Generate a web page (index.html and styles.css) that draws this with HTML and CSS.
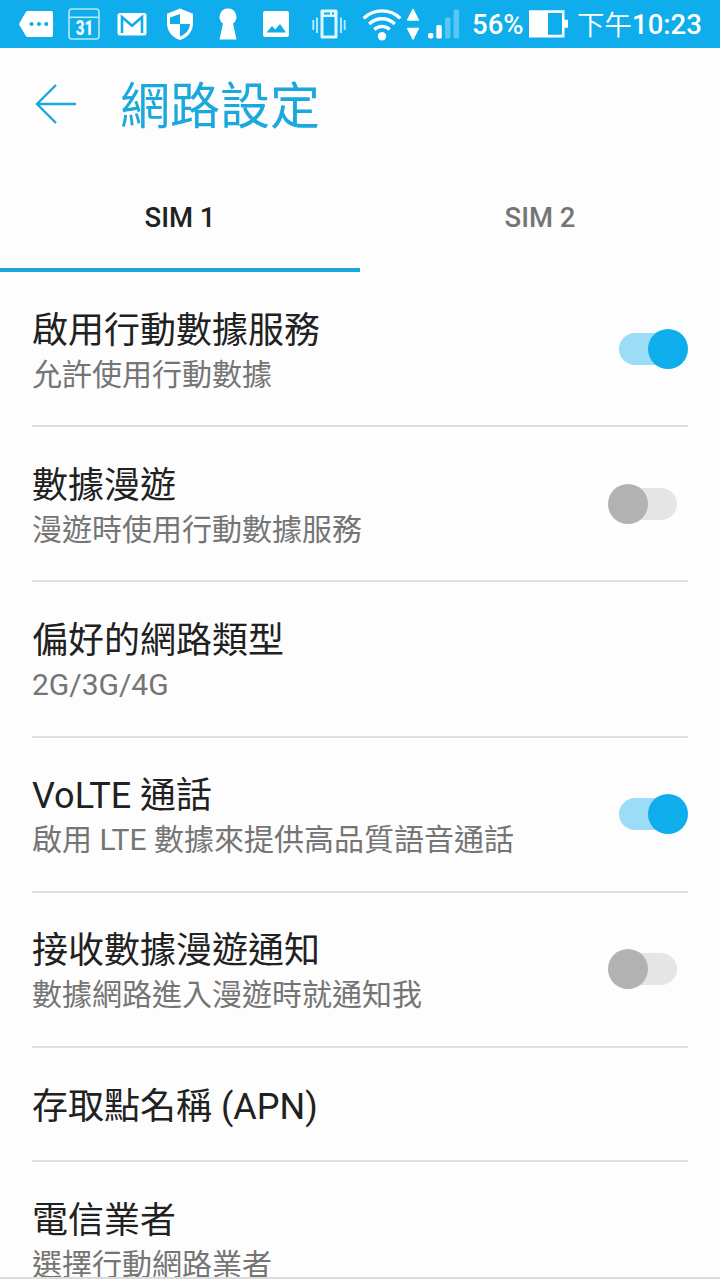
FILE: index.html
```html
<!DOCTYPE html>
<html lang="zh-Hant">

<head>
    <meta charset="UTF-8">
    <meta name="viewport" content="width=device-width, initial-scale=1.0">
    <title>網路設定</title>
    <link rel="stylesheet" href="styles.css">
</head>

<body>
    <div id="status-bar">
        <div class="notifications">
            <!-- message tag -->
            <svg width="48" height="48" viewBox="0 0 48 48">
                <path d="M15.500 11H39a2 2 0 0 1 2 2v22a2 2 0 0 1-2 2H15.500a2 2 0 0 1-1.600-.9L7.500 25.200a2 2 0 0 1 0-2.200l6.400-11a2 2 0 0 1 1.600-1z" fill="#fff"/>
                <g fill="#0fadec"><circle cx="19.500" cy="24" r="2.100"/><circle cx="27" cy="24" r="2.100"/><circle cx="34.300" cy="24" r="2.100"/></g>
            </svg>
            <!-- calendar -->
            <svg width="48" height="48" viewBox="0 0 48 48">
                <rect x="9" y="9" width="30" height="30" rx="3" fill="none" stroke="#b4ecfb" stroke-width="1.600"/>
                <path d="M9 17.300h30" stroke="#b4ecfb" stroke-width="1.600"/>
                <text x="24.500" y="35.300" text-anchor="middle" class="calendar-day" textLength="17.500" lengthAdjust="spacingAndGlyphs">31</text>
            </svg>
            <!-- mail -->
            <svg width="48" height="48" viewBox="0 0 48 48">
                <rect x="9.500" y="13" width="29" height="22.500" rx="2.500" fill="#fff"/>
                <path d="M14 33V17l10 8.700L34 17v16" fill="none" stroke="#0fadec" stroke-width="2.600"/>
            </svg>
            <!-- shield -->
            <svg width="48" height="48" viewBox="0 0 48 48">
                <path d="M24 8.500l13 5.300v9.700c0 7.500-5.200 14-13 16.500-7.800-2.500-13-9-13-16.500v-9.700z" fill="#fff"/>
                <path d="M24 14v10H14v-6.500zM24 24h10c-.3 5.500-4 10-10 12.500z" fill="#0fadec"/>
            </svg>
            <!-- keyhole -->
            <svg width="48" height="48" viewBox="0 0 48 48">
                <path d="M24 8.500a8.300 8.300 0 0 1 5 15L32.500 39.500h-17L19 23.500a8.300 8.300 0 0 1 5-15z" fill="#fff"/>
            </svg>
            <!-- picture -->
            <svg width="48" height="48" viewBox="0 0 48 48">
                <rect x="11" y="11" width="26" height="26" rx="2" fill="#fff"/>
                <path d="M14.500 32.500l5.500-6.500 3.300 3.600 4.700-5.600 6 8.500z" fill="#0fadec"/>
            </svg>
        </div>
        <div class="system">
            <!-- vibrate -->
            <svg class="vibrate" width="34" height="48" viewBox="0 0 34 48">
                <path fill-rule="evenodd" d="M10 9.500h14a1.500 1.500 0 0 1 1.500 1.500v26a1.500 1.500 0 0 1-1.500 1.500H10A1.500 1.500 0 0 1 8.500 37V11A1.500 1.500 0 0 1 10 9.500zM11.500 17v18.500h11V17zM12 12.500v2h6v-2zM20 12.500v2h2v-2z" fill="#dff8ff"/>
                <path d="M1.300 20v10M5 17.500v15.500M29 17.500v15.500M32.700 20v10" stroke="#b4ecfb" stroke-width="1.900"/>
            </svg>
            <svg class="wifi" width="40" height="48" viewBox="0 0 40 48">
                <g fill="none" stroke="#fff" stroke-width="3.300">
                    <path d="M1.700 18.300c10-10 26.600-10 36.600 0"/>
                    <path d="M7.200 24c7-7 18.600-7 25.600 0"/>
                    <path d="M12.300 29.500c4.300-4.300 11.100-4.300 15.400 0"/>
                </g>
                <circle cx="20" cy="36.200" r="4.200" fill="#fff"/>
            </svg>
            <svg class="traffic" width="14" height="48" viewBox="0 0 14 48">
                <path d="M7 9.500l5.300 10.500H1.700zM7 39l5.300-10.500H1.700z" fill="#fff" stroke="#fff" stroke-width="1.500" stroke-linejoin="round"/>
            </svg>
            <svg class="signal" width="34" height="48" viewBox="0 0 34 48">
                <g fill="#fff"><rect x="1" y="33" width="5.500" height="5.500" rx="2"/><rect x="9.300" y="25" width="5.500" height="13.500" rx="1.500"/></g>
                <g fill="#58c7f3"><rect x="18" y="17.500" width="5.500" height="21" rx="1.500"/><rect x="26.600" y="9.500" width="5.500" height="29" rx="1.500"/></g>
            </svg>
            <span class="percent">56%</span>
            <svg class="battery" width="40" height="48" viewBox="0 0 40 48">
                <path fill-rule="evenodd" d="M0 10.200h35.500v9.500H39v8h-3.500v9.900H0zM19 13v21.700h14V13z" fill="#fff"/>
            </svg>
            <span class="clock"><span class="ampm">下午</span><b>10:23</b></span>
        </div>
    </div>

    <div id="header">
        <svg class="back" width="42" height="42" viewBox="0 0 42 42">
            <path d="M21 2L2 21l19 19M2 21h39" fill="none" stroke="#1ba8dc" stroke-width="2.400"/>
        </svg>
        <h1>網路設定</h1>
    </div>

    <div id="tabs">
        <div class="tab active">SIM 1</div>
        <div class="tab">SIM 2</div>
    </div>

    <div id="settings">
        <div class="setting">
            <div class="label">
                <div class="title">啟用行動數據服務</div>
                <div class="summary">允許使用行動數據</div>
            </div>
            <div class="switch on"></div>
        </div>
        <div class="setting">
            <div class="label">
                <div class="title">數據漫遊</div>
                <div class="summary">漫遊時使用行動數據服務</div>
            </div>
            <div class="switch"></div>
        </div>
        <div class="setting">
            <div class="label">
                <div class="title">偏好的網路類型</div>
                <div class="summary">2G/3G/4G</div>
            </div>
        </div>
        <div class="setting">
            <div class="label">
                <div class="title">VoLTE 通話</div>
                <div class="summary">啟用 LTE 數據來提供高品質語音通話</div>
            </div>
            <div class="switch on"></div>
        </div>
        <div class="setting">
            <div class="label">
                <div class="title">接收數據漫遊通知</div>
                <div class="summary">數據網路進入漫遊時就通知我</div>
            </div>
            <div class="switch"></div>
        </div>
        <div class="setting single">
            <div class="label">
                <div class="title">存取點名稱 (APN)</div>
            </div>
        </div>
        <div class="setting">
            <div class="label">
                <div class="title">電信業者</div>
                <div class="summary">選擇行動網路業者</div>
            </div>
        </div>
    </div>
</body>

</html>
```
FILE: styles.css
```css
* {
    box-sizing: border-box;
}

body {
    font-family: Roboto, "Noto Sans CJK TC", sans-serif;
    background-color: #fdfdfd;
    color: #212121;
    margin: 0;
    height: 1279px;
    overflow: hidden;
    display: flex;
    flex-direction: column;
    border-bottom: 2px solid #dcdcdc;
}

svg {
    display: block;
    flex-shrink: 0;
}

/* Status bar */
#status-bar {
    display: flex;
    flex-shrink: 0;
    height: 48px;
    padding-left: 12px;
    background-color: #0fadec;
    color: #fff;
}

.notifications,
.system {
    display: flex;
    align-items: center;
}

.calendar-day {
    font-size: 20px;
    font-weight: 900;
    fill: #effcff;
}

.vibrate {
    margin-left: 12px;
}

.wifi {
    margin-left: 16px;
}

.traffic {
    margin-left: 4px;
}

.signal {
    margin-left: 7px;
}

.percent {
    width: 56px;
    margin-left: 11px;
    font-size: 27.5px;
    font-weight: 500;
    line-height: 48px;
    padding-top: 2px;
}

.battery {
    margin-left: 1px;
}

.clock {
    display: flex;
    margin-left: 8px;
    font-size: 27.5px;
    line-height: 48px;
    padding-top: 2px;
    white-space: nowrap;
}

.ampm {
    font-weight: 350;
    padding-top: 1px;
}

.clock b {
    font-weight: 500;
}

/* Title row */
#header {
    display: flex;
    flex-shrink: 0;
    align-items: center;
    height: 112px;
    padding-left: 35px;
    color: #1ba8dc;
}

h1 {
    margin: 0 0 0 43px;
    padding-top: 6px;
    font-size: 50px;
    font-weight: 400;
    line-height: 106px;
}

/* SIM tabs */
#tabs {
    display: flex;
    flex-shrink: 0;
    height: 112px;
}

.tab {
    flex: 1;
    border-bottom: 4px solid transparent;
    color: #757575;
    font-size: 27.5px;
    font-weight: 500;
    line-height: 115px;
    text-align: center;
}

.tab.active {
    border-bottom-color: #1ba8dc;
    color: #212121;
}

/* Settings list */
#settings {
    margin: 0 32px;
}

.setting {
    display: flex;
    align-items: center;
    justify-content: space-between;
    height: 155.2px;
    border-bottom: 2px solid #dedede;
}

.setting.single {
    height: 114px;
}

.label {
    padding-top: 8px;
}

.single .label {
    padding-top: 6px;
}

.title {
    font-size: 36px;
    line-height: 44px;
}

.summary {
    color: #757575;
    font-size: 30px;
    line-height: 44px;
}

.switch {
    position: relative;
    width: 57px;
    height: 32px;
    margin-right: 11px;
    border-radius: 16px;
    background-color: #e5e5e5;
}

.switch::before {
    content: "";
    position: absolute;
    top: -4px;
    left: -12px;
    width: 40px;
    height: 40px;
    border-radius: 50%;
    background-color: #b2b2b2;
}

.switch.on {
    margin-right: 12px;
    background-color: #9bddf7;
}

.switch.on::before {
    left: 29px;
    background-color: #0fadec;
}
```
